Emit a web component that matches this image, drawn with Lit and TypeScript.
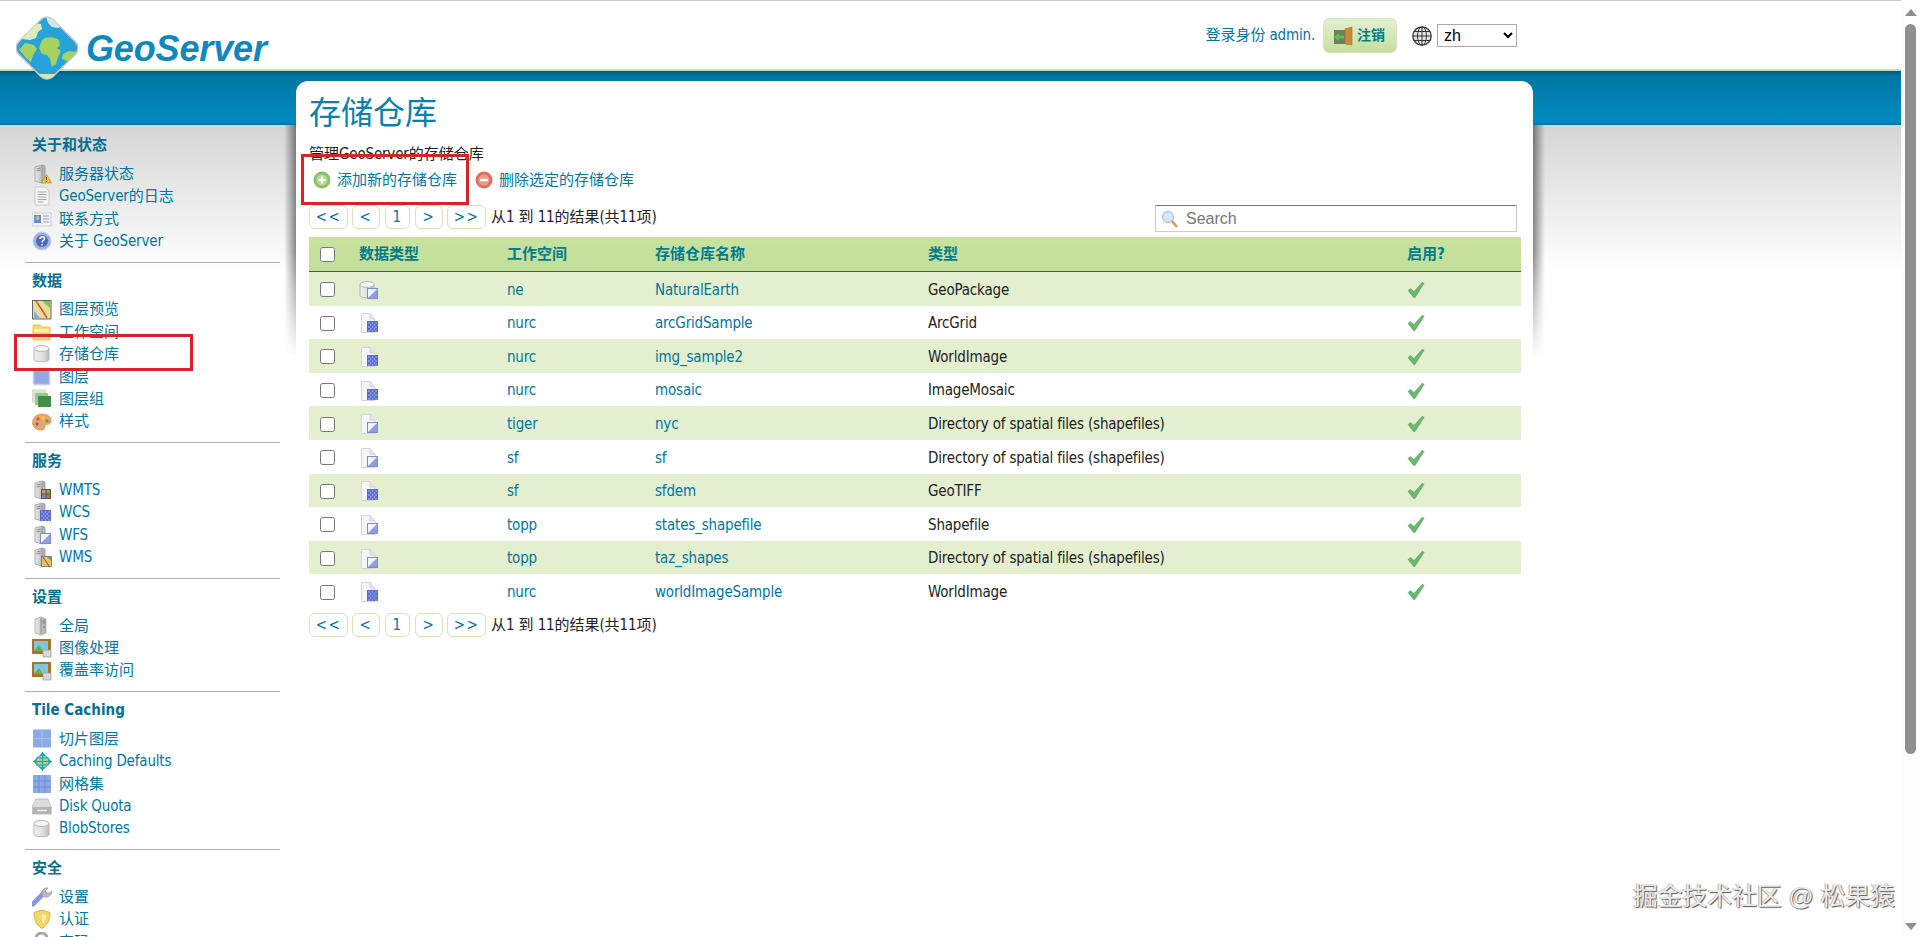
import { LitElement, html, css, svg } from "lit";
import { customElement } from "lit/decorators.js";

const server = svg`<path d="M3 3l7-2 3 1v15l-3 2-7-2z" fill="url(#sg)" stroke="#9a9a9a" stroke-width=".8"/><path d="M10 2v16" stroke="#8d8d8d" stroke-width=".8"/><path d="M4.500 5l4-1M4.500 7l4-1" stroke="#777" stroke-width=".8"/>`;
const badge = (inner: unknown) => svg`<g transform="translate(9 9)"><rect x=".5" y=".5" width="10" height="10" stroke="#666" stroke-width=".8" fill="#fff"/>${inner}</g>`;
const dots = svg`<rect x="0" y="0" width="11" height="11" fill="#5868cc"/><g fill="#b9c4f4"><circle cx="2" cy="2" r=".8"/><circle cx="5.500" cy="2" r=".8"/><circle cx="9" cy="2" r=".8"/><circle cx="3.700" cy="4" r=".8"/><circle cx="7.300" cy="4" r=".8"/><circle cx="2" cy="6" r=".8"/><circle cx="5.500" cy="6" r=".8"/><circle cx="9" cy="6" r=".8"/><circle cx="3.700" cy="8" r=".8"/><circle cx="7.300" cy="8" r=".8"/><circle cx="2" cy="10" r=".8"/><circle cx="5.500" cy="10" r=".8"/><circle cx="9" cy="10" r=".8"/></g>`;
const vectorSq = svg`<rect x="0" y="0" width="11" height="11" fill="#fff"/><rect x="1" y="1" width="9" height="9" fill="#8f9de0"/><path d="M1 10L10 1H1z" fill="#f2f3fc"/><rect x=".5" y=".5" width="10" height="10" fill="none" stroke="#7d8bd0" stroke-width="1"/>`;
const page = svg`<path d="M2.500 .5H11l5 5.500v13.500H2.500z" fill="#f6f6f9" stroke="#d4d4da"/><path d="M11 .5v5.500h5" fill="#e2e2e8" stroke="#d4d4da"/>`;
const cyl = (x = 2, w = 15) => svg`<path d="M${x} 4.500v11c0 3 ${w} 3 ${w} 0v-11z" fill="url(#cg)" stroke="#b5b5b5"/><ellipse cx="${x + w / 2}" cy="4.500" rx="${w / 2}" ry="3" fill="#f6f6f6" stroke="#b5b5b5"/>`;
const pic = svg`<rect x="0" y="1" width="19" height="15" fill="#a8722e"/><rect x="2" y="3" width="14" height="10" fill="#7fc7d9"/><path d="M2 13l5-6 4 6z" fill="#6fae4a"/><path d="M11 12h8v7h-8z" fill="#d8d8d8" stroke="#999" stroke-width=".7"/>`;

const icons: Record<string, unknown> = {
  status: svg`${server}<path d="M14.500 10.500l5 8.500H9.500z" fill="#f4c634" stroke="#b98a14" stroke-width=".7"/><path d="M14.500 13v3M14.500 17v1" stroke="#6b4c05"/>`,
  log: svg`<path d="M3 1h10l4 4v14H3z" fill="#f7f7f7" stroke="#c8c8c8"/><path d="M5.500 6h9M5.500 8.500h9M5.500 11h9M5.500 13.500h9M5.500 16h6" stroke="#a5a5a5"/>`,
  contact: svg`<rect x="0" y="4" width="19" height="13" fill="#f2f3f8" stroke="#c5c9d8" stroke-width=".8"/><rect x="2" y="6" width="7" height="8" fill="#5f8fd6"/><circle cx="5.500" cy="9" r="2" fill="#e9b26f"/><path d="M11 7h6M11 10h6M11 13h6" stroke="#9b9fb0"/>`,
  about: svg`<circle cx="10" cy="10" r="9" fill="#9fb2e2" stroke="#c0cdee"/><circle cx="10" cy="10" r="6" fill="#4a69bd"/><path d="M8 8c0-3 4.500-3 4.500-.5 0 2-2.500 2-2.500 4M10 13v1.500" stroke="#fff" stroke-width="1.600" fill="none"/>`,
  preview: svg`<rect x="0.500" y="0.500" width="18.500" height="18.500" fill="#e7dd9a" stroke="#666"/><path d="M4 1l6 9 5 8" stroke="#d6562d" stroke-width="1.500" fill="none"/><path d="M10 1h8v7z" fill="#8fb86a"/><path d="M2 11l6 7H2z" fill="#7ab0d8"/>`,
  folder: svg`<path d="M1 5V3h7l2 2h8v13H1z" fill="#f5d878" stroke="#e3c25a"/><path d="M2 7h15v3H2z" fill="#fdf0b8"/>`,
  store: cyl(),
  layer: svg`<rect x="1.500" y="1.500" width="16" height="16" rx="1" fill="#90a8e4" stroke="#c0cdf0" stroke-width="1.500"/>`,
  group: svg`<rect x="0.500" y="1" width="13" height="12" fill="#d8e8d0" stroke="#bcd0b4" stroke-width=".6"/><rect x="3" y="4" width="13" height="12" fill="#9cc690"/><rect x="6" y="7" width="13" height="11" fill="#3f8f44"/>`,
  style: svg`<path d="M10 2c6 0 10 3.500 9 8-.6 3-4.500 2-5.500 3-1.200 1.500.5 4-3 5C5 19 0 15 0.500 10 1 5 5 2 10 2z" fill="#eda565" stroke="#cf8a4d" stroke-width=".6"/><circle cx="6" cy="7" r="1.700" fill="#e6503c"/><circle cx="11" cy="6" r="1.700" fill="#f0d040"/><circle cx="15" cy="9" r="1.700" fill="#5aa850"/><circle cx="5" cy="12" r="1.700" fill="#4a78c8"/>`,
  wmts: svg`${server}<g transform="translate(9 9)"><rect width="10" height="10" fill="#555"/><rect x="1" y="1" width="3.500" height="3.500" fill="#d99a3a"/><rect x="5.500" y="1" width="3.500" height="3.500" fill="#7fa84f"/><rect x="1" y="5.500" width="3.500" height="3.500" fill="#6f8fd0"/><rect x="5.500" y="5.500" width="3.500" height="3.500" fill="#c86a3a"/></g>`,
  wcs: svg`${server}<g transform="translate(8 8)">${dots}</g>`,
  wfs: svg`${server}<g transform="translate(8 8)">${vectorSq}</g>`,
  wms: svg`${server}${badge(svg`<rect x="1" y="1" width="9" height="9" fill="#e2c85f"/><path d="M2 1l6 9" stroke="#cf5a2d" stroke-width="1.300"/><path d="M6 1h4v4z" fill="#6fa24f"/>`)}`,
  global: svg`<path d="M3 3l6-2 5 2v14l-5 2-6-2z" fill="url(#sg)" stroke="#a8a8a8" stroke-width=".8"/><path d="M9 2v16" stroke="#8b8b8b"/><path d="M10.500 5h2.500M10.500 7h2.500" stroke="#777"/><circle cx="11.700" cy="11" r=".9" fill="#4caf50"/>`,
  img: pic,
  tile: svg`<rect x="1" y="0.500" width="18" height="18" fill="#8caae6"/><path d="M10 .5v18M1 9.500h18" stroke="#a9c0ef" stroke-width="1"/>`,
  caching: svg`<rect x="4" y="4" width="13" height="13" rx="2" transform="rotate(45 10.500 10.500)" fill="#25a0a8"/><circle cx="10.500" cy="10.500" r="6" fill="#9ed1a0"/><path d="M1 10.500h19M10.500 1v19M4 7h13M4 14h13" stroke="#2a9fa8" stroke-width="1"/>`,
  grid: svg`<rect x="1" y="1" width="18" height="18" fill="#8caae6"/><path d="M7 1v18M13 1v18M1 7h18M1 13h18" stroke="#6a8bd4" stroke-width="1"/>`,
  disk: svg`<path d="M4 3h12l3 8v7H0v-7z" fill="#dcdcdc" stroke="#b0b0b0" stroke-width=".7"/><rect x="0.500" y="11" width="19" height="7" fill="#b3b3b3"/><path d="M5 14.500h10" stroke="#eee" stroke-width="1.500"/>`,
  blob: cyl(),
  wrench: svg`<path d="M1 17L12 6" stroke="#8899dd" stroke-width="5" stroke-linecap="round"/><path d="M10 8c-1-4 2-8 6-7l-3 3 1 2 3 0 3-2c0 4-4 7-8 6z" fill="#bdbdbd" stroke="#8f8f8f" stroke-width=".6"/>`,
  shield: svg`<path d="M10 1l8 2.500c0 7-1.500 12-8 16-6.500-4-8-9-8-16z" fill="#f2d66b" stroke="#d9b640"/><path d="M10 5l4 1.300c0 4-.9 6.500-4 9z" fill="#fbeeb0"/>`,
  key: svg`<circle cx="9.500" cy="6.500" r="5.500" fill="none" stroke="#a9a9a9" stroke-width="3"/><path d="M9.500 12v7" stroke="#a9a9a9" stroke-width="3"/>`,
};

const nav: { title: string; items: [string, string][] }[] = [
  { title: "关于和状态", items: [["status", "服务器状态"], ["log", "GeoServer的日志"], ["contact", "联系方式"], ["about", "关于 GeoServer"]] },
  { title: "数据", items: [["preview", "图层预览"], ["folder", "工作空间"], ["store", "存储仓库"], ["layer", "图层"], ["group", "图层组"], ["style", "样式"]] },
  { title: "服务", items: [["wmts", "WMTS"], ["wcs", "WCS"], ["wfs", "WFS"], ["wms", "WMS"]] },
  { title: "设置", items: [["global", "全局"], ["img", "图像处理"], ["img", "覆盖率访问"]] },
  { title: "Tile Caching", items: [["tile", "切片图层"], ["caching", "Caching Defaults"], ["grid", "网格集"], ["disk", "Disk Quota"], ["blob", "BlobStores"]] },
  { title: "安全", items: [["wrench", "设置"], ["shield", "认证"], ["key", "密码"]] },
];

type Kind = "db" | "vec" | "ras";
const rows: [Kind, string, string, string][] = [
  ["db", "ne", "NaturalEarth", "GeoPackage"],
  ["ras", "nurc", "arcGridSample", "ArcGrid"],
  ["ras", "nurc", "img_sample2", "WorldImage"],
  ["ras", "nurc", "mosaic", "ImageMosaic"],
  ["vec", "tiger", "nyc", "Directory of spatial files (shapefiles)"],
  ["vec", "sf", "sf", "Directory of spatial files (shapefiles)"],
  ["ras", "sf", "sfdem", "GeoTIFF"],
  ["vec", "topp", "states_shapefile", "Shapefile"],
  ["vec", "topp", "taz_shapes", "Directory of spatial files (shapefiles)"],
  ["ras", "nurc", "worldImageSample", "WorldImage"],
];

const kindIcon = (k: Kind) =>
  k === "db"
    ? svg`${cyl(1, 14)}<g transform="translate(8 8)">${vectorSq}</g>`
    : k === "ras"
    ? svg`${page}<g transform="translate(8 8)">${dots}</g>`
    : svg`${page}<g transform="translate(8 8)">${vectorSq}</g>`;

/** Latin runs are tracked slightly tighter than the CJK runs around them. */
const txt = (s: string) =>
  s.split(/([\x00-\x7f]+)/).map((p) => (/[\x00-\x7f]/.test(p) ? html`<span class="l">${p}</span>` : p));

const pager = () => html`<div class="pager">
  <button class="pg wide">&lt;&lt;</button><button class="pg mid">&lt;</button><button class="pg one">1</button><button class="pg mid">&gt;</button><button class="pg wide">&gt;&gt;</button>
  <span class="count">${txt("从1 到 11的结果(共11项)")}</span>
</div>`;

@customElement("app-root")
export class AppRoot extends LitElement {
  static styles = css`
    :host { display: flex; height: 100vh; overflow: hidden; position: relative; background: #fff;
      font: 15px/22.4px "DejaVu Sans Condensed", "Liberation Sans", "Noto Sans CJK SC", sans-serif; color: #222; }
    a { color: #0076a1; text-decoration: none; }
    .l { letter-spacing: -.18px; }
    svg { display: block; flex: none; }
    .defs { position: absolute; width: 0; height: 0; }
    .page { flex: 1; min-width: 0; }
    header { height: 68px; border-top: 1px solid #ccc; border-bottom: 2px solid #c6dfa4; display: flex; align-items: flex-start; }
    .logo { position: relative; z-index: 2; display: flex; margin: 15px 0 0 16px; height: 64px; }
    .wordmark { font: italic bold 36px/68px "Liberation Sans", sans-serif; color: #0e88bd; margin: -1px 0 0 8px; height: 50px; letter-spacing: -.15px; }
    .user { margin-left: auto; margin-right: 384px; display: flex; align-items: center; margin-top: 17px; height: 35px; }
    .who { color: #0076a1; margin-right: 8px; }
    .logout { width: 74px; height: 35px; box-sizing: border-box; border-radius: 6px; border: 1px solid #d8e6bf; background: linear-gradient(#e4f0d0, #c5df9b); display: flex; align-items: center; padding-left: 9px; gap: 4px; color: #007b8c; font-weight: bold; font-size: 14px; }
    .globe { margin-left: 15px; }
    select { margin-left: 5px; width: 80px; height: 23px; box-sizing: border-box; font: 16px "Liberation Sans", sans-serif; background: #fff; border: 1px solid #a9a9a9; padding-left: 2px; color: #000; border-radius: 0; }
    .stage { display: flex; align-items: flex-start;
      background: linear-gradient(#00597a 0, #0076a1 5px, #008abf 48px, #0085b8 52px, #006f96 54px) 0 0 / 100% 54px no-repeat,
        linear-gradient(#d5d5d5, #fff) 0 54px / 100% 146px no-repeat; }
    aside { width: 255px; margin-left: 25px; padding-top: 56px; flex: none; }
    section { padding: 8px 0 9.3px; border-bottom: 1px solid #b3b0a3; }
    h3 { margin: 0 0 7.8px 7px; font-size: 15px; line-height: 20px; font-weight: bold; color: #066f91; }
    ul { margin: 0; padding: 0 0 0 7px; list-style: none; }
    li { height: 22.4px; display: flex; align-items: center; gap: 7px; }
    .card { position: relative; z-index: 1; margin: 10px 0 0 16px; width: 1237px; box-sizing: border-box; padding: 10px 12px 12px 13px; background: #fff; border-radius: 12px 12px 0 0; }
    .card::before { content: ""; position: absolute; z-index: -1; top: 44px; height: 232px; left: -12px; right: -12px;
      background: linear-gradient(to left, rgba(0,0,0,.45), transparent) 0 0 / 12px 100% no-repeat,
        linear-gradient(to right, rgba(0,0,0,.45), transparent) 100% 0 / 12px 100% no-repeat;
      -webkit-mask-image: linear-gradient(#000 55%, transparent); mask-image: linear-gradient(#000 55%, transparent); }
    h1 { margin: 0; font-size: 32px; line-height: 44px; font-weight: normal; color: #0a80ad; }
    .desc { margin: 8px 0 0; color: #222; line-height: 22px; }
    .actions { display: flex; margin: 4px 0 0 4px; height: 22px; align-items: center; }
    .act { display: flex; align-items: center; gap: 6px; margin-right: 18px; }
    .bar { display: flex; justify-content: space-between; align-items: flex-start; margin-top: 14px; height: 32px; }
    .pager { display: flex; align-items: center; height: 24px; gap: 4px; }
    .pg { box-sizing: border-box; height: 24px; padding: 0; border: 1px solid #dbe0bd; border-radius: 6px; background: #fff; color: #0076a1; font: 15px/20px "DejaVu Sans Condensed", "Liberation Sans", sans-serif; letter-spacing: 1.5px; }
    .wide { width: 39px; } .mid { width: 28px; } .one { width: 25px; margin: 0 1px; }
    .count { margin-left: 1px; }
    .search { position: relative; margin-right: 4px; display: flex; }
    .search svg { position: absolute; left: 6px; top: 5px; }
    input.q { width: 362px; height: 27px; box-sizing: border-box; padding: 0 0 0 30px; border: 1px solid #ccc; border-top: 1px solid #777; font: 16px "Liberation Sans", sans-serif; outline: none; }
    input.q::placeholder { color: #777; }
    .row { display: grid; grid-template-columns: 50px 148px 148px 273px 479px 114px; align-items: center; }
    .row > * { min-width: 0; }
    .head { height: 34px; background: linear-gradient(#c8e2a0, #c3de97); border-bottom: 1px solid #00708a; font-weight: bold; color: #007b8c; }
    .body { height: 33.6px; box-sizing: border-box; padding-top: 2px; }
    .body:nth-child(even) { background: #e3efcf; }
    .cb { justify-self: center; margin: 0; width: 15px; height: 15px; position: relative; left: -7px; }
    .after { margin-top: 5px; }
    .scroll { flex: none; width: 19px; display: flex; flex-direction: column; align-items: center; background: #fdfdfd; }
    .up, .down { width: 0; height: 0; border-left: 6px solid transparent; border-right: 6px solid transparent; }
    .up { border-bottom: 7px solid #8f8f8f; margin-top: 9px; }
    .thumb { width: 11px; height: 730px; margin-top: 8px; border-radius: 6px; background: #8f8f8f; }
    .down { border-top: 7px solid #8f8f8f; margin-top: 169px; }
    .mark { position: absolute; pointer-events: none; z-index: 3; border: 3px solid #d8232a; box-sizing: border-box; }
    .m1 { left: 14px; top: 334px; width: 179px; height: 37px; }
    .m2 { left: 301px; top: 154px; width: 168px; height: 51px; }
    .water { position: absolute; z-index: 3; right: 25px; top: 882px; font: 24.8px/30px "Liberation Sans", "Noto Sans CJK SC", sans-serif; color: #ececec; text-shadow: 1px 1px 1px #555, -1px 0 0 #bbb; white-space: nowrap; }
  `;

  render() {
    return html`
      <svg class="defs" aria-hidden="true"><defs>
        <linearGradient id="cg" x1="0" x2="1" y1="0" y2="0"><stop offset="0" stop-color="#f0f0f0"/><stop offset=".6" stop-color="#dedede"/><stop offset="1" stop-color="#bcbcbc"/></linearGradient>
        <linearGradient id="sg" x1="0" x2="1" y1="0" y2="0"><stop offset="0" stop-color="#ececec"/><stop offset="1" stop-color="#a9a9a9"/></linearGradient>
      </defs></svg>
      <div class="page">
        <header>
          <div class="logo">
            <svg width="62" height="64" viewBox="0 0 62 64">
              <defs><clipPath id="dia"><rect x="6.500" y="7.500" width="49" height="49" rx="9" transform="rotate(45 31 32)"/></clipPath></defs>
              <rect x="6.500" y="7.500" width="49" height="49" rx="9" transform="rotate(45 31 32)" fill="#28a3d9" stroke="#c9c9c9" stroke-width="1.500"/>
              <g clip-path="url(#dia)">
                <path d="M26 24c5-4 12-3 17 0l1 5-3 3 4 3-3 6-2 7-4 3-2-8-3-4-5-1-3-6z" fill="#a7d160"/>
                <path d="M3 34l6-7 9 2 3 4-4 6-2 7-5-4-4-5z" fill="#a5d262"/>
                <path d="M16 7l9 1 1 5-4 3-2 6-6 2-8-1z" fill="#dcecc0"/>
                <path d="M30 0h9l10 9-7 3-6-1-4-4z" fill="#cfe9ea"/>
                <path d="M47 38l6-3 9 1-5 6-6 3-5-2z" fill="#a7d160"/>
                <path d="M16 58h30l-12 6h-8z" fill="#cfe5b8"/>
              </g>
            </svg>
            <span class="wordmark">GeoServer</span>
          </div>
          <div class="user">
            <span class="who">${txt("登录身份 admin.")}</span>
            <span class="logout">
              <svg width="20" height="20" viewBox="0 0 20 20"><rect x="1" y="4" width="11" height="14" fill="#6f7f5c"/><path d="M12 3l7-2v18l-7-1z" fill="#c9893f" stroke="#a86f2c" stroke-width=".6"/><path d="M1 11l5-4v2.500h5v3H6V15z" fill="#5cc24f"/></svg>
              注销
            </span>
            <svg class="globe" width="20" height="20" viewBox="0 0 20 20"><circle cx="10" cy="10" r="9.200" fill="#e4e4e4" stroke="#333" stroke-width="1.300"/><ellipse cx="10" cy="10" rx="4.500" ry="9.200" fill="none" stroke="#333"/><path d="M10 1v18M1 10h18M2.500 5.500h15M2.500 14.500h15" stroke="#333"/></svg>
            <select><option>zh</option></select>
          </div>
        </header>
        <div class="stage">
          <aside>
            ${nav.map(
              (s) => html`<section>
                <h3>${s.title}</h3>
                <ul>
                  ${s.items.map(
                    ([i, t]) => html`<li><svg width="20" height="20" viewBox="0 0 20 20">${icons[i]}</svg><a>${txt(t)}</a></li>`
                  )}
                </ul>
              </section>`
            )}
          </aside>
          <main class="card">
            <h1>存储仓库</h1>
            <p class="desc">${txt("管理GeoServer的存储仓库")}</p>
            <div class="actions">
              <a class="act"><svg width="18" height="18" viewBox="0 0 18 18"><circle cx="9" cy="9" r="8.500" fill="#8cc068"/><circle cx="9" cy="9" r="5.500" fill="#b8dc98"/><path d="M9 5.500v7M5.500 9h7" stroke="#fff" stroke-width="2.200"/></svg>添加新的存储仓库</a>
              <a class="act"><svg width="18" height="18" viewBox="0 0 18 18"><circle cx="9" cy="9" r="8.500" fill="#e0705f"/><circle cx="9" cy="9" r="5.500" fill="#ee9b8c"/><path d="M5 9h8" stroke="#fff" stroke-width="2.400"/></svg>删除选定的存储仓库</a>
            </div>
            <div class="bar">
              ${pager()}
              <label class="search">
                <svg width="18" height="18" viewBox="0 0 18 18"><circle cx="7" cy="7" r="5.500" fill="#d6e6f5" stroke="#9db8d0"/><path d="M11 11l5 6" stroke="#d89a55" stroke-width="2.500"/></svg>
                <input class="q" placeholder="Search" />
              </label>
            </div>
            <div class="table">
              <div class="row head">
                <input class="cb" type="checkbox" /><span>数据类型</span><span>工作空间</span><span>存储仓库名称</span><span>类型</span><span>启用?</span>
              </div>
              ${rows.map(
                ([k, ws, name, type]) => html`<div class="row body">
                  <input class="cb" type="checkbox" />
                  <svg width="20" height="20" viewBox="0 0 20 20">${kindIcon(k)}</svg>
                  <a class="l">${ws}</a><a class="l">${name}</a><span class="l">${type}</span>
                  <svg width="20" height="16" viewBox="0 0 20 16"><path d="M1 8.500l2.500-2 3.500 3L15.500 0l1.500 1.500-9 14H6.500z" fill="#6ab870" stroke="#4f9e59" stroke-width=".5"/></svg>
                </div>`
              )}
            </div>
            <div class="after">${pager()}</div>
          </main>
        </div>
      </div>
      <div class="scroll"><div class="up"></div><div class="thumb"></div><div class="down"></div></div>
      <div class="mark m1"></div>
      <div class="mark m2"></div>
      <div class="water">掘金技术社区 @ 松果猿</div>
    `;
  }
}
